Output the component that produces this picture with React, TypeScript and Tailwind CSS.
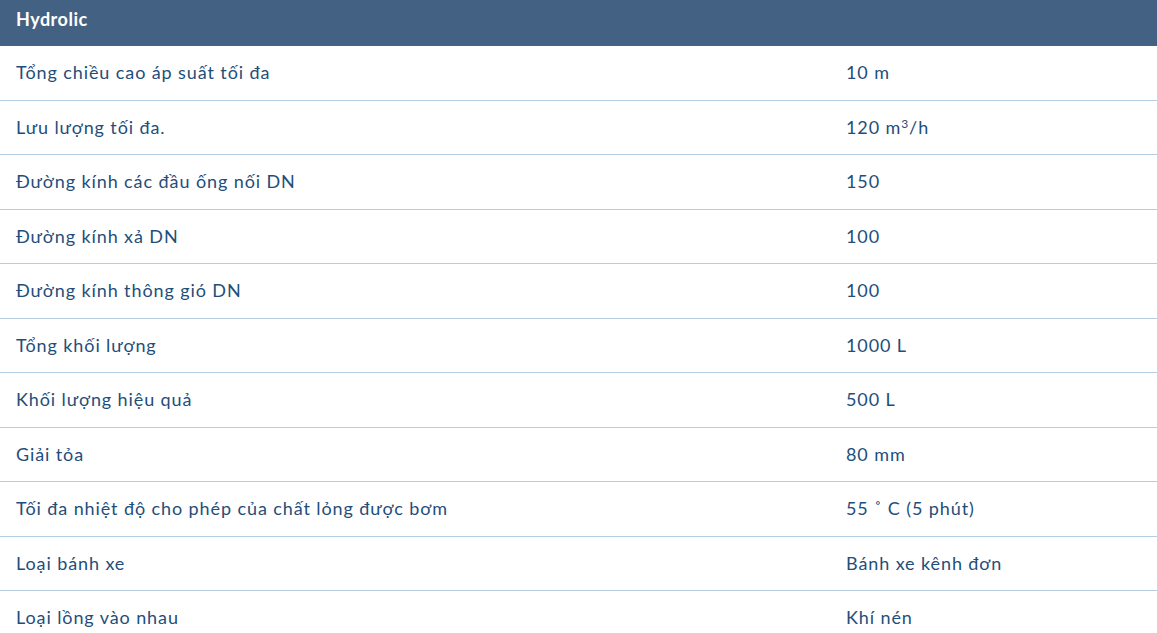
const rows: [string, React.ReactNode][] = [
  ["Tổng chiều cao áp suất tối đa", "10 m"],
  [
    "Lưu lượng tối đa.",
    <>
      120 m<sup className="text-[12px]">3</sup>/h
    </>,
  ],
  ["Đường kính các đầu ống nối DN", "150"],
  ["Đường kính xả DN", "100"],
  ["Đường kính thông gió DN", "100"],
  ["Tổng khối lượng", "1000 L"],
  ["Khối lượng hiệu quả", "500 L"],
  ["Giải tỏa", "80 mm"],
  ["Tối đa nhiệt độ cho phép của chất lỏng được bơm", "55 ˚ C (5 phút)"],
  ["Loại bánh xe", "Bánh xe kênh đơn"],
  ["Loại lồng vào nhau", "Khí nén"],
];

export default function App() {
  return (
    <div className="w-[1157px] h-[633px] overflow-hidden bg-white font-['Lato','Open_Sans',sans-serif] text-[18px] tracking-[0.9px] text-[#1f4e7a]">
      <div className="flex h-[46px] items-center bg-[#436283] px-4 pb-[8px] font-bold tracking-[0.5px] text-white">
        Hydrolic
      </div>
      {rows.map(([label, value], i) => (
        <div
          key={i}
          className="grid h-[54.5px] grid-cols-[830px_1fr] items-center border-b border-[#b3cde3]"
        >
          <div className="px-4">{label}</div>
          <div className="px-4">{value}</div>
        </div>
      ))}
    </div>
  );
}
